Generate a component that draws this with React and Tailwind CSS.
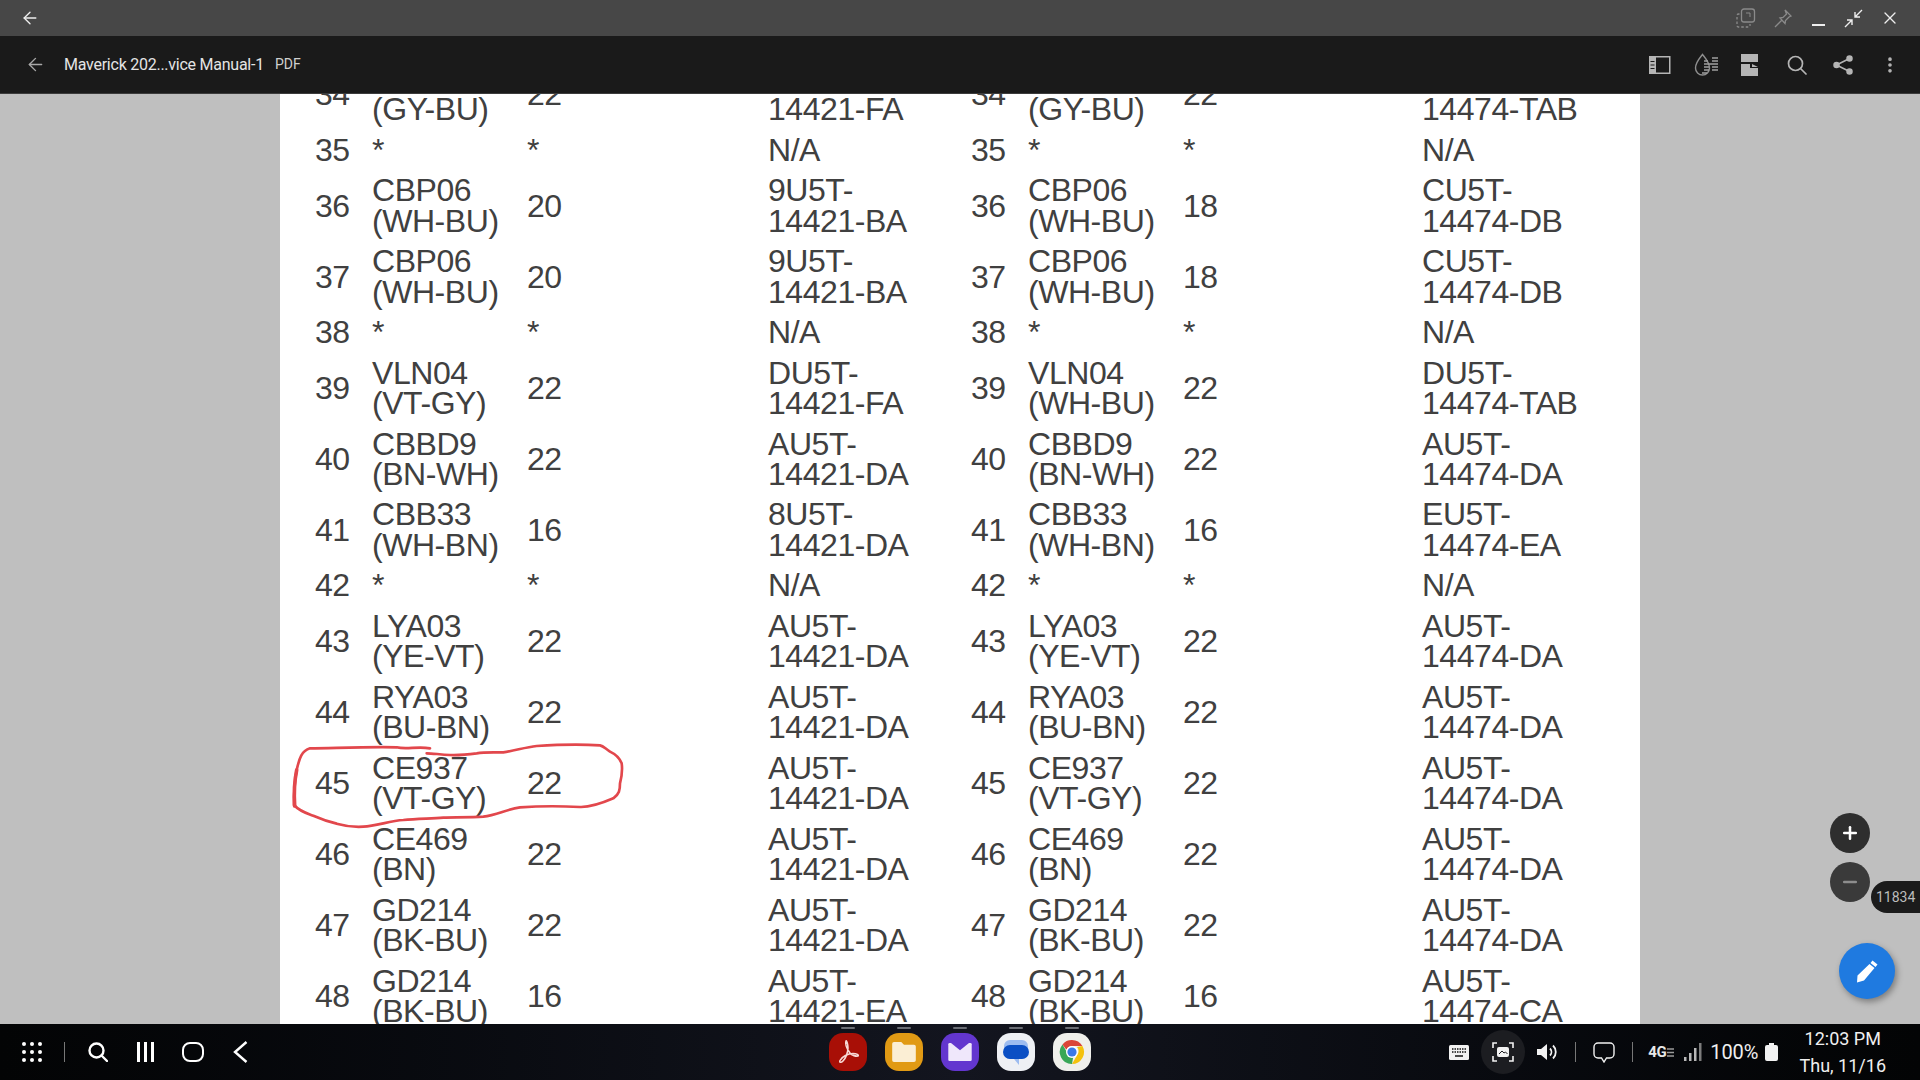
import React from 'react';
import { ArrowLeft, X, Minus, Plus, EllipsisVertical } from 'lucide-react';

const rows = [
    ['34', 'CBB34\n(GY-BU)', '22', 'DU5T-\n14421-FA', '34', 'CBB34\n(GY-BU)', '22', 'DU5T-\n14474-TAB'],
    ['35', '*', '*', 'N/A', '35', '*', '*', 'N/A'],
    ['36', 'CBP06\n(WH-BU)', '20', '9U5T-\n14421-BA', '36', 'CBP06\n(WH-BU)', '18', 'CU5T-\n14474-DB'],
    ['37', 'CBP06\n(WH-BU)', '20', '9U5T-\n14421-BA', '37', 'CBP06\n(WH-BU)', '18', 'CU5T-\n14474-DB'],
    ['38', '*', '*', 'N/A', '38', '*', '*', 'N/A'],
    ['39', 'VLN04\n(VT-GY)', '22', 'DU5T-\n14421-FA', '39', 'VLN04\n(WH-BU)', '22', 'DU5T-\n14474-TAB'],
    ['40', 'CBBD9\n(BN-WH)', '22', 'AU5T-\n14421-DA', '40', 'CBBD9\n(BN-WH)', '22', 'AU5T-\n14474-DA'],
    ['41', 'CBB33\n(WH-BN)', '16', '8U5T-\n14421-DA', '41', 'CBB33\n(WH-BN)', '16', 'EU5T-\n14474-EA'],
    ['42', '*', '*', 'N/A', '42', '*', '*', 'N/A'],
    ['43', 'LYA03\n(YE-VT)', '22', 'AU5T-\n14421-DA', '43', 'LYA03\n(YE-VT)', '22', 'AU5T-\n14474-DA'],
    ['44', 'RYA03\n(BU-BN)', '22', 'AU5T-\n14421-DA', '44', 'RYA03\n(BU-BN)', '22', 'AU5T-\n14474-DA'],
    ['45', 'CE937\n(VT-GY)', '22', 'AU5T-\n14421-DA', '45', 'CE937\n(VT-GY)', '22', 'AU5T-\n14474-DA'],
    ['46', 'CE469\n(BN)', '22', 'AU5T-\n14421-DA', '46', 'CE469\n(BN)', '22', 'AU5T-\n14474-DA'],
    ['47', 'GD214\n(BK-BU)', '22', 'AU5T-\n14421-DA', '47', 'GD214\n(BK-BU)', '22', 'AU5T-\n14474-DA'],
    ['48', 'GD214\n(BK-BU)', '16', 'AU5T-\n14421-EA', '48', 'GD214\n(BK-BU)', '16', 'AU5T-\n14474-CA'],
];

const DockIcon = ({ bg, children }) => (
    <div className='relative w-[38px] h-[38px]'>
        <div className='absolute -top-[6px] left-[12px] w-[14px] h-[2px] rounded-full bg-[#6b6e75]'></div>
        <div className={`w-[38px] h-[38px] rounded-[14px] flex items-center justify-center overflow-hidden ${bg}`}>{children}</div>
    </div>
);

const SearchIcon = ({ className, color, width }) => (
    <svg className={className} width='20' height='20' viewBox='0 0 20 20' fill='none' stroke={color} strokeWidth={width} strokeLinecap='round'>
        <circle cx='8.500' cy='8.500' r='7' />
        <path d='M13.500 13.500L19 19' />
    </svg>
);

const App = () => {
    return (
        <div className="w-[1920px] h-[1080px] flex flex-col overflow-hidden font-['Roboto',sans-serif] bg-[#bfbfbf]">
            {/* window title bar */}
            <div className='h-[36px] shrink-0 bg-[#474747] flex items-center pl-[20px]'>
                <ArrowLeft className='w-[20px] h-[20px] text-[#eeeeee]' strokeWidth={1.6} />
                <div className='ml-auto flex items-center gap-[17px] pr-[20px]'>
                    <svg width='20' height='20' viewBox='0 0 20 20' fill='none' stroke='#8a8a8a' strokeWidth='1.3'>
                        <rect x='5.5' y='1' width='13' height='13' rx='2.5' />
                        <path d='M3.5 6H2.5a1.5 1.5 0 0 0-1.5 1.5v10A1.5 1.5 0 0 0 2.5 19h10a1.5 1.5 0 0 0 1.5-1.5V16' strokeDasharray='2.5 2' />
                        <path d='M10 5h4v4' strokeWidth='1' />
                    </svg>
                    <svg width='20' height='20' viewBox='0 0 20 20' fill='none' stroke='#8a8a8a' strokeWidth='1.3'>
                        <path d='M12 2l6 6-2 1-3.5 3.5-.5 3L7 10l3-.5L13.5 6 12 2zM8.5 12.5L2 19' />
                    </svg>
                    <div className='w-[13px] h-[2px] bg-[#eeeeee] mt-[14px] mx-[2px]'></div>
                    <svg width='19' height='19' viewBox='0 0 19 19' fill='none' stroke='#eeeeee' strokeWidth='1.4'>
                        <path d='M18 1l-7 7M11 3v5h5M1 18l7-7M8 16v-5H3' />
                    </svg>
                    <X className='w-[20px] h-[20px] text-[#eeeeee]' strokeWidth={1.6} />
                </div>
            </div>

            {/* pdf toolbar */}
            <div className='h-[58px] shrink-0 bg-[#1a1a1a] border-b border-[#3c3c3c] flex items-center pl-[25px] pr-[20px]'>
                <ArrowLeft className='w-[21px] h-[21px] text-[#a8a8a8]' strokeWidth={1.6} />
                <span className='ml-[18px] text-[16px] tracking-[-0.25px] text-[#e4e4e4] whitespace-nowrap'>Maverick 202...vice Manual-1</span>
                <span className='ml-[11px] text-[14px] text-[#d0d0d0]'>PDF</span>
                <div className='ml-auto flex items-center'>
                    <svg width='22' height='18' viewBox='0 0 22 18' fill='none'>
                        <rect x='.75' y='.75' width='20' height='16.5' stroke='#b5b5b5' strokeWidth='1.5' />
                        <rect x='0' y='0' width='7' height='18' fill='#b5b5b5' />
                        <path d='M1.5 5.5h4M1.5 9h4M1.5 12.5h4' stroke='#1a1a1a' strokeWidth='1.2' />
                    </svg>
                    <svg className='ml-[23px]' width='25' height='24' viewBox='0 0 25 24' fill='none' stroke='#8f8f8f' strokeWidth='1.4'>
                        <path d='M8.5 1.5C12 6 15.5 9.5 15.5 15a7 7 0 0 1-14 0c0-5.500 3.500-9 7-13.500z' />
                        <path d='M10 8h4M10 11h14M10 14h5M18 5h6M18 8h6M18 14h6M18 17h6M10 17h5M8 20h5' stroke='#a0a0a0' />
                    </svg>
                    <svg className='ml-[22px]' width='17' height='22' viewBox='0 0 17 22' fill='#b5b5b5'>
                        <path d='M0 0h17v8H0zM0 10h9v4h8v8H0zM11 10l6 3h-6z' />
                    </svg>
                    <SearchIcon className='ml-[29px]' color='#b5b5b5' width='1.7' />
                    <svg className='ml-[26px]' width='20' height='20' viewBox='0 0 20 20' fill='#b5b5b5' stroke='#b5b5b5' strokeWidth='1.5'>
                        <circle cx='3.500' cy='10' r='2.500' />
                        <circle cx='16.500' cy='3.500' r='2.500' />
                        <circle cx='16.500' cy='16.500' r='2.500' />
                        <path d='M3.500 10l13-6.500M3.500 10l13 6.500' fill='none' />
                    </svg>
                    <EllipsisVertical className='ml-[27px] w-[20px] h-[20px] text-[#b5b5b5]' strokeWidth={2.4} />
                </div>
            </div>

            {/* document */}
            <div className='relative flex-1 overflow-hidden'>
                <div className="w-[1360px] h-full ml-[280px] overflow-hidden bg-white font-['Liberation_Sans',sans-serif] text-[32px] leading-[30.6px] tracking-[-0.45px] text-[#404040]">
                    <div className='-mt-[35px]'>
                        {rows.map((row) => (
                            <div key={row[0]} className='grid grid-cols-[57px_155px_241px_203px_57px_155px_239px_1fr] items-center pl-[35px] py-[4.9px]'>
                                {row.map((cell, i) => (
                                    <div key={i} className='whitespace-pre-line'>{cell}</div>
                                ))}
                            </div>
                        ))}
                    </div>
                </div>

                {/* hand drawn marker around row 45 */}
                <svg className='absolute left-[270px] top-[626px]' width='400' height='130' viewBox='0 0 1200 390' fill='none' stroke='#e2474c' strokeLinecap='round' strokeLinejoin='round'>
                    <path strokeWidth='8' d='M480 85C440 78 410 90 380 82C300 80 200 84 120 85C95 92 88 115 80 150C72 190 72 230 72 255C90 275 110 280 130 287C160 300 175 305 200 311C225 318 250 322 280 320C320 318 360 302 400 300C440 296 480 296 520 293C570 292 610 292 640 290C680 285 710 268 750 262C810 258 870 258 930 261C960 262 1000 248 1030 235C1048 222 1050 210 1050 190C1055 170 1058 150 1055 130C1048 112 1035 102 1020 95C1005 85 1000 78 990 76C930 72 860 74 800 78C765 82 735 92 700 97C670 98 645 96 620 100C590 104 565 106 540 105C510 104 490 100 470 100' />
                    <path strokeWidth='11' d='M80 150C72 190 72 230 74 258' />
                </svg>

                {/* zoom controls */}
                <div className='absolute left-[1830px] top-[719px] w-[40px] h-[40px] rounded-full bg-[#2e2e2e] flex items-center justify-center'>
                    <Plus className='w-[20px] h-[20px] text-white' strokeWidth={3} />
                </div>
                <div className='absolute left-[1830px] top-[768px] w-[40px] h-[40px] rounded-full bg-[#3a3a3a] flex items-center justify-center'>
                    <Minus className='w-[20px] h-[20px] text-[#8d8d8d]' strokeWidth={3} />
                </div>
                <div className='absolute left-[1871px] top-[787px] w-[49px] h-[32px] rounded-l-full bg-[#1b1b1b] flex items-center pl-[5px] text-[14px] text-[#bdbdbd]'>11834</div>
                <div className='absolute left-[1839px] top-[849px] w-[56px] h-[56px] rounded-full bg-[#1f7ae0] shadow-[2px_3px_6px_rgba(0,0,0,0.35)] flex items-center justify-center'>
                    <svg width='24' height='24' viewBox='0 0 24 24' fill='#ffffff'>
                        <path d='M17.500 1.500l5 4-2 2.500-5-4zM14.500 5l5 4L9 21.500l-7 2 .5-7z' />
                    </svg>
                </div>
            </div>

            {/* android task bar */}
            <div className='h-[56px] shrink-0 bg-gradient-to-r from-[#030405] via-[#13151f] to-[#030405] flex items-center text-white'>
                <div className='w-[829px] shrink-0 flex items-center pl-[22px]'>
                    <div className='grid grid-cols-3 gap-x-[4px] gap-y-[4px]'>
                        {[0, 1, 2, 3, 4, 5, 6, 7, 8].map((d) => (
                            <div key={d} className='w-[4px] h-[4px] rounded-full bg-white'></div>
                        ))}
                    </div>
                    <div className='ml-[22px] w-px h-[20px] bg-[#777777]'></div>
                    <SearchIcon className='ml-[23px]' color='#ffffff' width='2.4' />
                    <div className='ml-[29px] flex gap-[4px]'>
                        <div className='w-[3px] h-[20px] bg-white'></div>
                        <div className='w-[3px] h-[20px] bg-white'></div>
                        <div className='w-[3px] h-[20px] bg-white'></div>
                    </div>
                    <div className='ml-[28px] w-[22px] h-[20px] rounded-[8px] border-[2.5px] border-white'></div>
                    <svg className='ml-[29px]' width='15' height='22' viewBox='0 0 15 22' fill='none' stroke='#ffffff' strokeWidth='2.4'>
                        <path d='M13.500 1L2 11l11.500 10' />
                    </svg>
                </div>

                <div className='flex items-center gap-[18px]'>
                    <DockIcon bg='bg-[#a80f06]'>
                        <svg width='26' height='26' viewBox='0 0 26 26' fill='none' stroke='#f7d8d4' strokeWidth='1.6'>
                            <path d='M11 2c-1 3 1 8 4 12 2 2.500 6 3.500 8 3 1-1-1-2.500-5-2.500-5 0-11 3-13 7-1 2 1 2.500 3 .5 3-3 5-9 5-13 0-4-1.500-8-2-7z' />
                        </svg>
                    </DockIcon>
                    <DockIcon bg='bg-[#e19a14]'>
                        <svg width='24' height='20' viewBox='0 0 26 22' fill='#fbeed4'>
                            <path d='M2 0h8l3 3h11a2 2 0 0 1 2 2v15a2 2 0 0 1-2 2H2a2 2 0 0 1-2-2V2a2 2 0 0 1 2-2z' />
                        </svg>
                    </DockIcon>
                    <DockIcon bg='bg-[#6336cf]'>
                        <svg width='24' height='18' viewBox='0 0 26 20'>
                            <rect width='26' height='20' rx='1.500' fill='#efe7fb' />
                            <path d='M3 0h20L13 8z' fill='#6336cf' />
                        </svg>
                    </DockIcon>
                    <DockIcon bg='bg-[#eef0f4]'>
                        <svg width='28' height='30' viewBox='0 0 28 30'>
                            <path d='M8 3h12a6 6 0 0 1 6 6v6a7 7 0 0 1-7 7h-2v6l-5-6H8a6 6 0 0 1-6-6V9a6 6 0 0 1 6-6z' fill='#9dbcf0' />
                            <rect x='1' y='8' width='26' height='14' rx='7' fill='#0b4fc4' />
                        </svg>
                    </DockIcon>
                    <DockIcon bg='bg-[#efefeb]'>
                        <svg width='28' height='28' viewBox='0 0 28 28'>
                            <path d='M14 2a12 12 0 0 1 10.400 6H14a6 6 0 0 0-5.600 3.800L4.500 6.400A12 12 0 0 1 14 2z' fill='#db4437' />
                            <path d='M24.400 8A12 12 0 0 1 14 26l5.200-9A6 6 0 0 0 19 9z' fill='#f4c20d' />
                            <path d='M14 26A12 12 0 0 1 4.500 6.400l5.200 9a6 6 0 0 0 5.500 3.500z' fill='#3aa757' />
                            <circle cx='14' cy='14' r='6' fill='#ffffff' />
                            <circle cx='14' cy='14' r='4.600' fill='#3b78e7' />
                        </svg>
                    </DockIcon>
                </div>

                <div className='ml-auto flex items-center pr-[34px]'>
                    <svg width='20' height='15' viewBox='0 0 20 15'>
                        <rect width='20' height='15' rx='1.500' fill='#f2f2f2' />
                        <path d='M3 4h14M3 7h14' stroke='#111' strokeWidth='1.500' strokeDasharray='1.500 1' />
                        <path d='M6 11h8' stroke='#111' strokeWidth='1.500' />
                    </svg>
                    <div className='ml-[12px] w-[44px] h-[44px] rounded-full bg-[#1c1d21] flex items-center justify-center'>
                        <svg width='22' height='20' viewBox='0 0 22 20' fill='none' stroke='#f2f2f2' strokeWidth='1.600'>
                            <path d='M1 6V1h4M17 1h4v5M21 14v5h-4M5 19H1v-5' />
                            <rect x='5' y='5' width='12' height='10' rx='2' fill='#f2f2f2' stroke='none' />
                            <path d='M7 12l3-3 2 2 1.500-1 2 2' stroke='#1c1d21' strokeWidth='1' />
                        </svg>
                    </div>
                    <svg className='ml-[12px]' width='20' height='18' viewBox='0 0 20 18' fill='none'>
                        <path d='M0 6h4l6-5v16l-6-5H0z' fill='#f2f2f2' />
                        <path d='M13 5.500a5 5 0 0 1 0 7M16 2.500a9 9 0 0 1 0 13' stroke='#f2f2f2' strokeWidth='1.800' />
                    </svg>
                    <div className='ml-[18px] w-px h-[20px] bg-[#777777]'></div>
                    <svg className='ml-[17px]' width='22' height='21' viewBox='0 0 22 21' fill='none' stroke='#f2f2f2' strokeWidth='1.400'>
                        <path d='M5 1h12a4 4 0 0 1 4 4v7a4 4 0 0 1-4 4h-3.500L11 20l-2.500-4H5a4 4 0 0 1-4-4V5a4 4 0 0 1 4-4z' />
                    </svg>
                    <div className='ml-[17px] w-px h-[20px] bg-[#777777]'></div>
                    <span className='ml-[15px] text-[15px] font-bold leading-none tracking-[-0.5px] text-[#e8e8e8]'>4G</span>
                    <svg className='ml-[1px]' width='7' height='9' viewBox='0 0 7 9' stroke='#9a9a9a' strokeWidth='1.400'>
                        <path d='M0 1h7M0 4.500h7M0 8h7' />
                    </svg>
                    <svg className='ml-[10px]' width='18' height='18' viewBox='0 0 18 18' fill='#b8b8b8'>
                        <rect x='0' y='14' width='2.500' height='4' />
                        <rect x='5' y='10' width='2.500' height='8' />
                        <rect x='10' y='5' width='2.500' height='13' />
                        <rect x='15' y='0' width='2.500' height='18' fill='#7c7c7c' />
                    </svg>
                    <span className='ml-[8px] text-[20px] leading-none text-[#efefef]'>100%</span>
                    <svg className='ml-[6px]' width='13' height='18' viewBox='0 0 13 18' fill='#f2f2f2'>
                        <path d='M4 0h5v2h2a2 2 0 0 1 2 2v12a2 2 0 0 1-2 2H2a2 2 0 0 1-2-2V4a2 2 0 0 1 2-2h2z' />
                    </svg>
                    <div className='ml-[22px] flex flex-col items-center gap-[7px] text-[18px] leading-[20px] text-[#efefef]'>
                        <span>12:03 PM</span>
                        <span>Thu, 11/16</span>
                    </div>
                </div>
            </div>
        </div>
    );
};

export default App;
